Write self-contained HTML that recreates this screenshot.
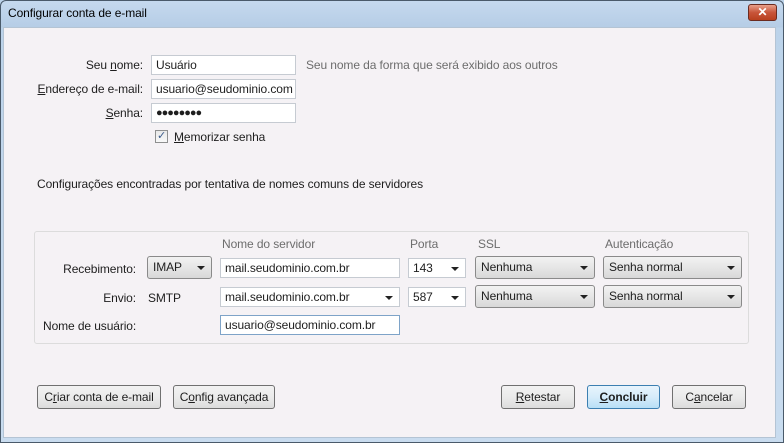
<!DOCTYPE html>
<html><head><meta charset="utf-8"><style>
*{margin:0;padding:0;box-sizing:border-box}
body{width:784px;height:443px;overflow:hidden;font-family:"Liberation Sans",sans-serif;font-size:12px;letter-spacing:-0.1px;color:#1e1e1e;background:#bcd3ea;position:relative}
.frame{position:absolute;left:0;top:0;width:784px;height:443px;border:1px solid #4a5a6a;border-radius:6px 6px 0 0;background:linear-gradient(#c5d9ee,#b6cde6 26px,#bcd3ea 27px,#c9dcef)}
.title{position:absolute;left:8px;top:6px;font-size:12px;color:#000}
.close{position:absolute;left:748px;top:4px;width:29px;height:17px;border:1px solid #6b2b20;border-radius:3px;background:linear-gradient(#e8a08a,#c8553a 50%,#b8401f);color:#fff;font-weight:bold;font-size:12px;text-align:center;line-height:15px}
.client{position:absolute;left:3px;top:27px;width:773px;height:411px;background:#f5f2f5;border:1px solid #b4c4d4}
.a{position:absolute;white-space:nowrap}
.r{text-align:right}
.in{position:absolute;background:#fff;border:1px solid #c6cbd2;height:20px;padding:2px 4px;line-height:15px;white-space:nowrap;overflow:hidden}
.dd{position:absolute;border:1px solid #8a8a8a;border-radius:3px;background:linear-gradient(#f2f2f2,#e6e6e6 50%,#d8d8d8);height:23px;padding:3px 5px;line-height:15px}
.arr{position:absolute;right:6px;top:9px;width:0;height:0;border-left:4px solid transparent;border-right:4px solid transparent;border-top:4px solid #222}
.btn{position:absolute;border:1px solid #707070;border-radius:3px;background:linear-gradient(#f2f2f2,#ebebeb 50%,#dcdcdc);height:24px;text-align:center;line-height:22px}
.gray{color:#6d6d6d}
u{text-decoration:underline}
</style></head><body>
<div class="frame"></div>
<div class="title">Configurar conta de e-mail</div>
<div class="close">✕</div>
<div class="client"></div>

<div class="a r" style="left:20px;width:123px;top:58px">Seu <u>n</u>ome:</div>
<div class="a r" style="left:20px;width:123px;top:82px"><u>E</u>ndereço de e-mail:</div>
<div class="a r" style="left:20px;width:123px;top:106px"><u>S</u>enha:</div>
<div class="in" style="left:151px;top:55px;width:145px">Usuário</div>
<div class="in" style="left:151px;top:79px;width:145px;padding-left:4px">usuario@seudominio.com</div>
<div class="in" style="left:151px;top:103px;width:145px;font-size:11px;letter-spacing:-1px;line-height:14px">●●●●●●●●</div>
<div class="a gray" style="left:306px;top:58px">Seu nome da forma que será exibido aos outros</div>
<div class="a" style="left:155px;top:130px;width:13px;height:13px;border:1px solid #8e8f8f;background:linear-gradient(#e8e8e8,#f8f8f8);font-size:11px;line-height:11px;text-align:center;color:#3a5a8a">✓</div>
<div class="a" style="left:174px;top:130px"><u>M</u>emorizar senha</div>

<div class="a" style="left:37px;top:177px">Configurações encontradas por tentativa de nomes comuns de servidores</div>

<div class="a" style="left:34px;top:231px;width:715px;height:113px;border:1px solid #dcdcdc;border-radius:3px"></div>
<div class="a gray" style="left:222px;top:237px">Nome do servidor</div>
<div class="a gray" style="left:410px;top:237px">Porta</div>
<div class="a gray" style="left:478px;top:237px">SSL</div>
<div class="a gray" style="left:605px;top:237px">Autenticação</div>

<div class="a r" style="left:40px;width:96px;top:262px">Recebimento:</div>
<div class="dd" style="left:147px;top:256px;width:65px">IMAP<span class="arr"></span></div>
<div class="in" style="left:220px;top:258px;width:180px">mail.seudominio.com.br</div>
<div class="in" style="left:408px;top:258px;width:58px">143<span class="arr" style="top:8px"></span></div>
<div class="dd" style="left:475px;top:256px;width:120px">Nenhuma<span class="arr"></span></div>
<div class="dd" style="left:603px;top:256px;width:139px">Senha normal<span class="arr"></span></div>

<div class="a r" style="left:40px;width:96px;top:291px">Envio:</div>
<div class="a" style="left:148px;top:291px">SMTP</div>
<div class="in" style="left:220px;top:287px;width:180px">mail.seudominio.com.br<span class="arr" style="top:8px"></span></div>
<div class="in" style="left:408px;top:287px;width:58px">587<span class="arr" style="top:8px"></span></div>
<div class="dd" style="left:475px;top:285px;width:120px">Nenhuma<span class="arr"></span></div>
<div class="dd" style="left:603px;top:285px;width:139px">Senha normal<span class="arr"></span></div>

<div class="a" style="left:43px;top:319px">Nome de usuário:</div>
<div class="in" style="left:220px;top:315px;width:180px;border-color:#7ea3c8">usuario@seudominio.com.br</div>

<div class="btn" style="left:37px;top:385px;width:124px">C<u>r</u>iar conta de e-mail</div>
<div class="btn" style="left:173px;top:385px;width:102px">C<u>o</u>nfig avançada</div>
<div class="btn" style="left:501px;top:385px;width:74px"><u>R</u>etestar</div>
<div class="btn" style="left:587px;top:385px;width:73px;border-color:#3c7fb1;background:linear-gradient(#e8f4fc,#d6ecfa 50%,#b8dff6);font-weight:bold"><u>C</u>oncluir</div>
<div class="btn" style="left:672px;top:385px;width:74px">C<u>a</u>ncelar</div>
</body></html>
